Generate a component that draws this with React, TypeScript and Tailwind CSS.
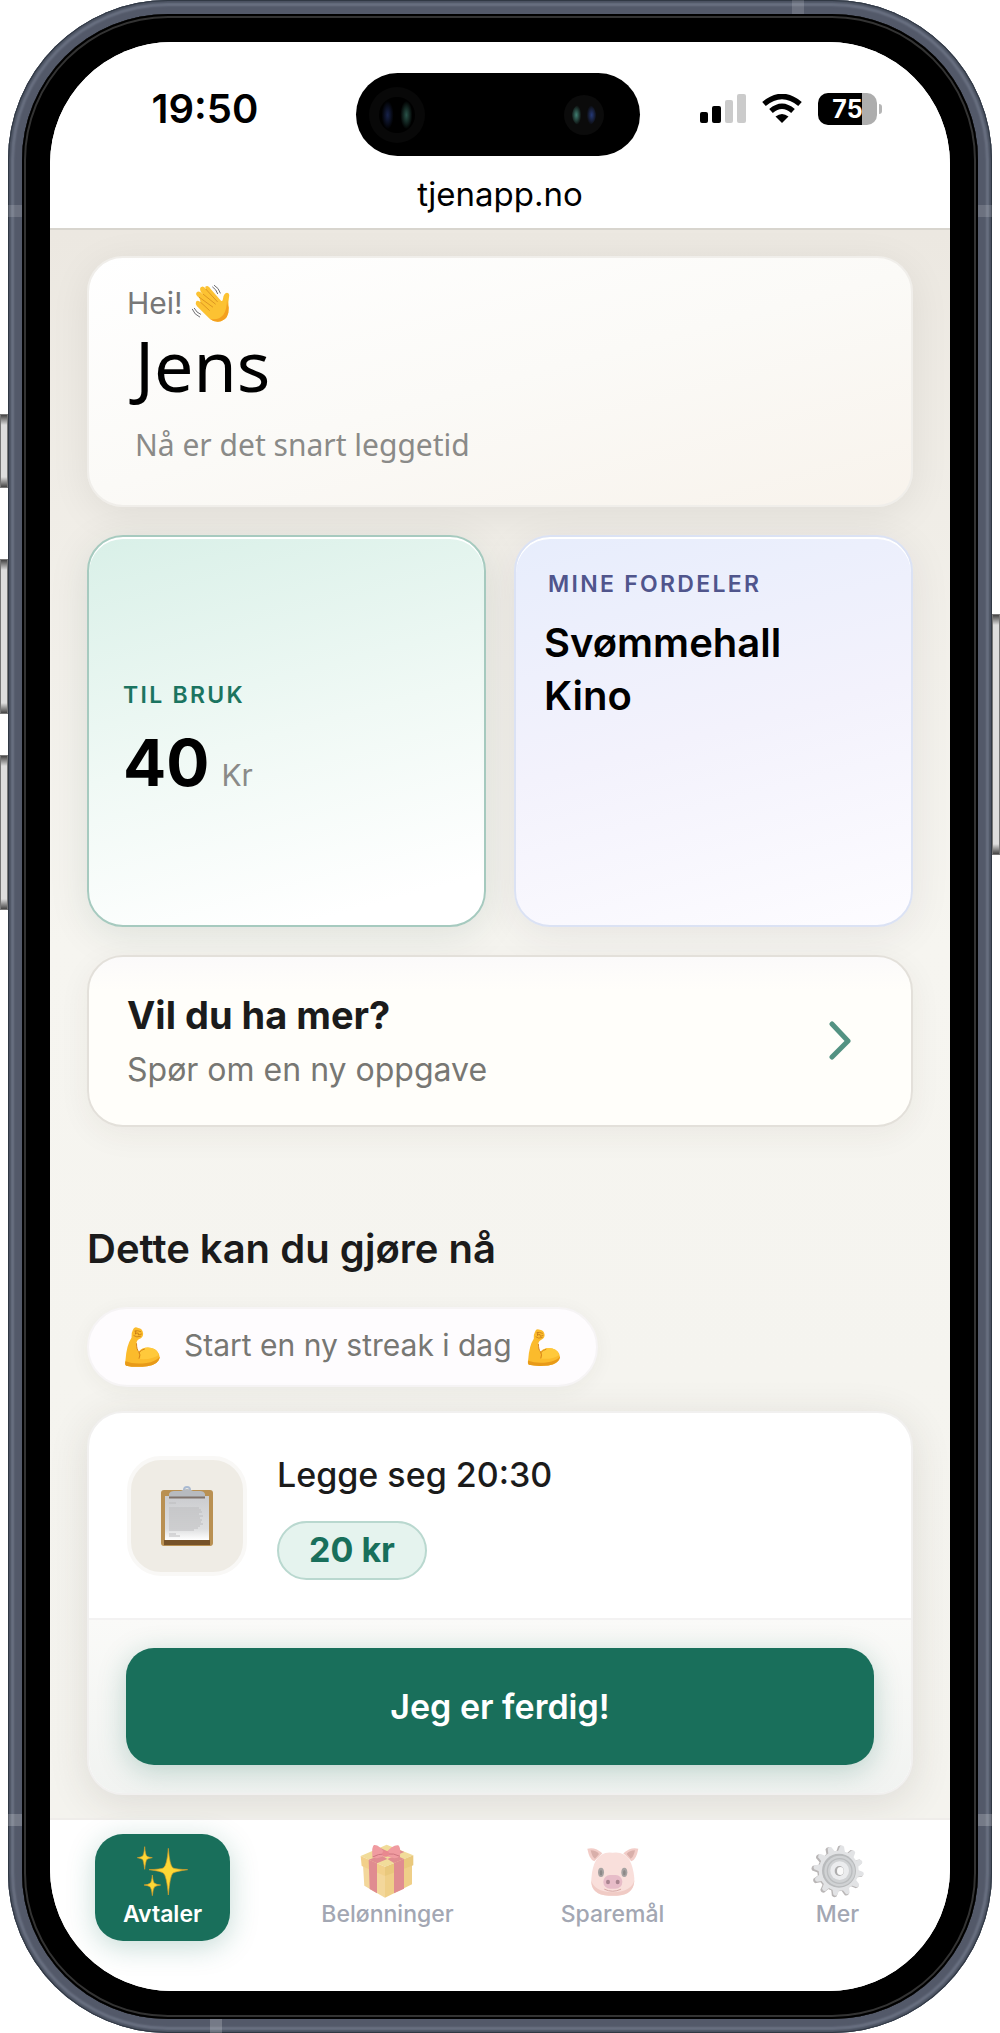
const perks = ['Svømmehall', 'Kino']

const tabs = [
  { label: 'Avtaler', href: '#avtaler', Icon: SparklesIcon, active: true },
  { label: 'Belønninger', href: '#belonninger', Icon: GiftIcon, active: false },
  { label: 'Sparemål', href: '#sparemal', Icon: PigIcon, active: false },
  { label: 'Mer', href: '#mer', Icon: GearIcon, active: false },
]

const gearTeeth = [0, 30, 60, 90, 120, 150, 180, 210, 240, 270, 300, 330]

function WaveIcon() {
  return (
    <svg viewBox="573 131 120 120" className="w-10 h-10" aria-hidden="true">
      <g stroke="#6f6f73" strokeWidth="3" fill="none" strokeLinecap="round">
        <path d="M643 138Q657 146 661 161M638 143Q649 150 653 163" />
        <path d="M577 210Q583 226 599 233M583 207Q589 220 602 225" />
      </g>
      <path
        d="M588 187Q594 181 602 189L598 176Q583 165 591 158Q598 153 610 167L602 157Q597 144 606 142Q612 140 618 150Q612 140 622 140Q628 141 632 149L663 184Q668 188 669 178Q671 161 681 160Q690 161 687 174Q684 187 686 205Q687 237 663 246Q645 251 629 238L591 201Q585 193 588 187Z"
        fill="#fcc232"
      />
      <path
        d="M686 205Q687 237 663 246Q645 251 629 238Q655 244 670 226Q681 212 681 180Q682 196 686 205Z"
        fill="#f4a01f"
      />
      <g stroke="#dd9622" strokeWidth="3" fill="none" strokeLinecap="round">
        <path d="M602 189L628 213M598 174L638 203M610 165L646 194M618 150L652 187" />
      </g>
    </svg>
  )
}

function MuscleIcon({ className }: { className: string }) {
  return (
    <svg viewBox="-2 -3 110 126" className={className} aria-hidden="true">
      <path
        d="M24 9Q28 -3 40 3Q53 4 55 20Q55 31 43 36Q33 41 35 55Q37 70 42 74Q56 58 80 63Q103 69 105 92Q99 113 67 118Q30 122 4 116Q-1 113 2 99Q5 54 20 32Q19 17 24 9Z"
        fill="#fbbb2c"
      />
      <path
        d="M2 103Q28 113 65 108Q92 104 105 89Q103 112 67 118Q30 122 4 116Q-1 113 2 103Z"
        fill="#e89a19"
      />
      <path d="M42 74Q56 58 80 63Q98 68 102 84Q80 99 45 96Q50 85 42 74Z" fill="#ffc93b" />
      <path
        d="M35 50Q35 68 42 74Q48 83 43 94M43 76Q50 68 59 66"
        stroke="#d78318"
        strokeWidth="3"
        fill="none"
        strokeLinecap="round"
      />
      <path
        d="M30 12Q38 9 48 14M32 19L40 18L41 24L50 21M27 26Q35 33 47 28M33 12L32 21"
        stroke="#b96a10"
        strokeWidth="2"
        fill="none"
        strokeLinecap="round"
      />
    </svg>
  )
}

function ClipboardIcon() {
  return (
    <svg viewBox="0 0 52 60" className="w-[52px] h-[60px]" aria-hidden="true">
      <defs>
        <linearGradient id="paper" x1="0" y1="0" x2="0" y2="1">
          <stop offset="0" stopColor="#cbcccf" />
          <stop offset="0.75" stopColor="#dedfe0" />
          <stop offset="1" stopColor="#ffffff" />
        </linearGradient>
      </defs>
      <rect y="4" width="52" height="56" rx="3" fill="#b99052" />
      <rect x="3" y="54" width="46" height="5" fill="#765229" />
      <rect x="4" y="10" width="44" height="44" fill="url(#paper)" />
      <circle cx="26" cy="4" r="3" fill="none" stroke="#a9bad2" strokeWidth="2" />
      <path d="M8 11V8Q9 5 13 5H20Q26 1 32 5H39Q43 5 44 8V11Z" fill="#b7babf" />
      <path d="M8 11.5H44" stroke="#7f726c" strokeWidth="2" />
      <path
        d="M8 17H15M8 22H38M8 24H40M8 26H41M8 28H38M8 30H42M8 32H39M8 34H41M8 36H40M8 38H42M8 40H39M8 42H37M8 44H33M8 48H15M8 50H19"
        stroke="#bcbcbe"
        strokeWidth="1"
      />
    </svg>
  )
}

function SparklesIcon() {
  return (
    <svg viewBox="408 732 162 162" className="w-[54px] h-[54px]" aria-hidden="true">
      <g fill="#fdd835" stroke="#d79b28" strokeWidth="2" strokeLinejoin="round">
        <path d="M505 745Q509 797 519 804Q528 808 563 809Q528 814 519 819Q510 827 505 885Q500 827 490 819Q481 813 447 809Q481 808 490 804Q501 797 505 745Z" />
        <path d="M434 740Q436 765 441 769Q445 772 457 773Q445 775 441 778Q437 782 434 808Q431 782 427 778Q422 775 412 773Q422 772 427 769Q432 765 434 740Z" />
        <path d="M457 825Q459 847 464 850Q469 854 482 855Q469 857 464 860Q459 865 457 887Q455 865 450 860Q445 857 432 855Q445 854 450 850Q455 847 457 825Z" />
      </g>
    </svg>
  )
}

function GiftIcon() {
  return (
    <svg viewBox="1080 729 162 162" className="w-[54px] h-[54px]" aria-hidden="true">
      <path d="M1089 793L1155 823V890L1093 854Z" fill="#f3d79b" />
      <path d="M1155 823L1236 790V850L1155 890Z" fill="#efcf88" />
      <path d="M1082 765L1160 731L1240 763L1155 797Z" fill="#f1dc9a" />
      <path d="M1082 765L1155 797V825L1085 795Z" fill="#f2d08a" />
      <path d="M1155 797L1240 763V793L1155 825Z" fill="#e9c87c" />
      <path d="M1106 776L1131 787V877L1109 864ZM1182 786L1212 774V863L1182 877Z" fill="#e08c90" />
      <path d="M1106 776L1190 743L1213 753L1131 787ZM1118 747L1182 786L1212 774L1140 740Z" fill="#e08c90" />
      <path d="M1155 758Q1138 730 1122 732Q1115 735 1117 768Q1134 778 1155 762Q1182 779 1200 766Q1203 739 1195 733Q1179 730 1155 758Z" fill="#f09ba0" />
      <path d="M1118 768Q1136 758 1152 759M1200 766Q1180 756 1163 759" stroke="#ce767f" strokeWidth="3" fill="none" />
      <rect x="1147" y="750" width="20" height="17" rx="7" fill="#e9888f" />
    </svg>
  )
}

function PigIcon() {
  return (
    <svg viewBox="257 730 162 162" className="w-[54px] h-[54px]" aria-hidden="true">
      <path d="M261 744Q285 738 306 758L282 782Q267 777 261 744Z" fill="#f2cdc8" />
      <path d="M414 744Q390 738 369 758L393 782Q408 777 414 744Z" fill="#f2cdc8" />
      <path d="M271 749Q288 749 296 760L284 774Q275 769 271 749ZM404 749Q387 749 379 760L391 774Q400 769 404 749Z" fill="#d9afaa" />
      <path d="M337 756Q371 751 388 779Q399 800 402 833Q404 882 350 885H325Q269 882 273 835Q275 800 287 779Q304 751 337 756Z" fill="#f9dfdb" />
      <path d="M273 838Q279 872 337 875Q396 872 402 838Q401 883 350 885H325Q272 883 273 838Z" fill="#f0cbc5" />
      <ellipse cx="302" cy="815" rx="9" ry="14" fill="#a7a3a2" />
      <ellipse cx="372" cy="815" rx="9" ry="14" fill="#a7a3a2" />
      <ellipse cx="302" cy="816" rx="4" ry="8" fill="#8c8988" />
      <ellipse cx="372" cy="816" rx="4" ry="8" fill="#8c8988" />
      <rect x="309" y="823" width="57" height="41" rx="20" fill="#e7bcc8" />
      <ellipse cx="323" cy="844" rx="6" ry="7" fill="#a98590" />
      <ellipse cx="352" cy="844" rx="6" ry="7" fill="#a98590" />
      <path d="M313 866Q337 878 361 866" stroke="#d6a8a5" strokeWidth="3" fill="none" strokeLinecap="round" />
    </svg>
  )
}

function GearIcon() {
  return (
    <svg viewBox="931 730 162 162" className="w-[54px] h-[54px]" aria-hidden="true">
      <g fill="#b9b6b6">
        {gearTeeth.map((a) => (
          <path key={a} d="M998 756L1002 737Q1009 731 1016 737L1021 756Z" transform={`rotate(${a + 8} 1010 812)`} />
        ))}
        <circle cx="1010" cy="812" r="60" />
      </g>
      <g fill="#e2e3e5">
        {gearTeeth.map((a) => (
          <path key={a} d="M1003 756L1008 737Q1014 731 1020 737L1026 756Z" transform={`rotate(${a + 8} 1014 810)`} />
        ))}
        <circle cx="1014" cy="810" r="60" />
      </g>
      <circle cx="1015" cy="810" r="51" fill="#b9bbbd" />
      <circle cx="1017" cy="811" r="46" fill="#d0d2d4" />
      <circle cx="1017" cy="811" r="39" fill="#bbbdbf" />
      <circle cx="1017" cy="811" r="35" fill="#d0d2d4" />
      <circle cx="1017" cy="810" r="28" fill="#ebecee" />
      <ellipse cx="1016" cy="811" rx="14" ry="15" fill="#aeadae" />
      <ellipse cx="1019" cy="811" rx="10" ry="12" fill="#fafafa" />
    </svg>
  )
}

function StatusBar() {
  return (
    <div className="flex items-center h-[83px]">
      <div className="flex-1 pb-3 pl-1 text-center text-[40px] leading-[48px] font-semibold">19:50</div>
      <div className="flex items-center justify-between w-[284px] h-full rounded-full bg-black pl-[13px] pr-9">
        <div className="flex items-center justify-center w-14 h-14 rounded-full bg-[#080808]">
          <div className="w-9 h-9 rounded-full bg-[radial-gradient(ellipse_6px_14px_at_24%_50%,#17224a,transparent),radial-gradient(ellipse_6px_14px_at_76%_50%,#295349,transparent)] bg-black" />
        </div>
        <div className="flex items-center justify-center w-10 h-10 rounded-full bg-[#0b0b0b]">
          <div className="w-6 h-6 rounded-full bg-[radial-gradient(ellipse_5px_10px_at_18%_50%,#418073,transparent),radial-gradient(ellipse_5px_10px_at_82%_50%,#263a78,transparent)]" />
        </div>
      </div>
      <div className="flex-1 flex items-center justify-center gap-4 pb-3 pr-2">
        <svg viewBox="0 0 46 29" className="w-[46px] h-[29px]" aria-label="Signal">
          <rect y="18" width="8" height="11" rx="2" />
          <rect x="12" y="12" width="9" height="17" rx="2" />
          <rect x="25" y="6" width="8" height="23" rx="2" fill="#cbcbcb" />
          <rect x="37" width="9" height="29" rx="2" fill="#cbcbcb" />
        </svg>
        <svg viewBox="0 0 40 29" className="w-10 h-[29px]" aria-label="Wi-Fi">
          <path d="M20 29L13.500 22.500Q20 17.500 26.500 22.500Z" />
          <path d="M9 17Q20 7.500 31 17" fill="none" stroke="#000" strokeWidth="5.500" />
          <path d="M2 10Q20 -5 38 10" fill="none" stroke="#000" strokeWidth="5.500" />
        </svg>
        <div className="flex items-center gap-0.5">
          <div className="w-[59px] h-8 rounded-[10px] bg-linear-to-r from-black from-75% to-[#adadad] to-75% text-white text-center text-[25px] leading-8 font-bold">
            75
          </div>
          <div className="w-[3px] h-2.5 rounded-r-full bg-[#b5b5b5]" />
        </div>
      </div>
    </div>
  )
}

function SideButton({ className }: { className: string }) {
  return (
    <div
      className={`absolute w-2 border border-[#777] bg-[linear-gradient(#444,#ddd_10px,#ddd_calc(100%-10px),#444)] ${className}`}
    />
  )
}

export default function App() {
  return (
    <div className="relative min-h-screen px-2 bg-white font-['Inter',sans-serif] text-black">
      {/* Hardware buttons */}
      <SideButton className="left-0 top-[414px] h-[74px]" />
      <SideButton className="left-0 top-[559px] h-[155px]" />
      <SideButton className="left-0 top-[755px] h-[155px]" />
      <SideButton className="right-0 top-[614px] h-[241px]" />

      {/* Metal frame */}
      <div className="relative flex flex-col min-h-screen rounded-[160px] p-3.5 bg-[#535969] shadow-[inset_0_0_0_1px_#303843,inset_0_0_2px_3px_#4a5160,inset_0_0_2px_6px_#6b7283]">
        {/* Antenna bands */}
        <div className="absolute top-0 left-[784px] w-3 h-3.5 bg-white/15" />
        <div className="absolute bottom-0 left-[202px] w-3 h-3.5 bg-white/20" />
        <div className="absolute left-0 top-[205px] w-3.5 h-3 bg-white/15" />
        <div className="absolute right-0 top-[205px] w-3.5 h-3 bg-white/15" />
        <div className="absolute left-0 bottom-[207px] w-3.5 h-3 bg-white/20" />
        <div className="absolute right-0 bottom-[207px] w-3.5 h-3 bg-white/20" />

        <div className="flex-1 flex flex-col rounded-[146px] p-7 bg-black shadow-[inset_0_0_0_2px_#000,inset_0_0_0_4px_#333]">
          <div className="flex-1 flex flex-col overflow-hidden rounded-[122px] bg-white">
            <header className="pt-[31px] border-b-2 border-[#d8d5ce] bg-white">
              <StatusBar />
              <p className="text-center text-[33px] leading-[68px] pt-1">tjenapp.no</p>
            </header>

            <main className="flex-1 flex flex-col px-[37px] pt-[26px] pb-5 bg-linear-to-b from-[#ece8e1] via-[#f6f5f0] via-45% to-[#f4f3ee]">
              <div className="flex flex-col gap-7">
                {/* Greeting */}
                <section className="rounded-[36px] border-2 border-[#f0eeea] px-[38px] pt-[25px] pb-[38px] bg-linear-165 from-white via-[#fbfaf7] to-[#f8f3ec] shadow-[0_8px_40px_rgba(0,0,0,0.07)]">
                  <p className="flex items-center gap-2 text-[30px] leading-10 text-[#777]">
                    Hei! <WaveIcon />
                  </p>
                  <div className="pl-2 font-['Noto_Sans',sans-serif]">
                    <h1 className="mt-0.5 text-[70px] leading-20">Jens</h1>
                    <p className="mt-[18px] text-[30px] leading-11 text-[#8a8a88]">Nå er det snart leggetid</p>
                  </div>
                </section>

                {/* Balance and perks */}
                <div className="grid grid-cols-2 gap-7">
                  <section className="flex flex-col justify-center min-h-[392px] rounded-[36px] border-2 border-[#a6cabf] px-[34px] pt-4 bg-linear-165 from-[#d9f0e8] via-[#f0f9f5] to-white to-90% shadow-[inset_0_2px_0_#fff,0_8px_40px_rgba(24,60,50,0.1)]">
                    <h2 className="text-[23px] leading-8 font-semibold tracking-widest uppercase text-[#1b7460]">Til bruk</h2>
                    <p className="flex items-baseline gap-3 mt-4 text-[64px] leading-[72px] font-bold">
                      40
                      <span className="text-[30px] leading-11 font-normal text-[#8a8a88]">Kr</span>
                    </p>
                  </section>
                  <section className="min-h-[392px] rounded-[36px] border-2 border-[#dbe2f4] px-7 pt-[31px] bg-linear-165 from-[#e7edfc] via-[#f3f2fc] to-[#fdfcff] shadow-[inset_0_2px_0_#fff,0_8px_40px_rgba(50,40,60,0.08)]">
                    <h2 className="pl-1 text-[23px] leading-8 font-semibold tracking-widest uppercase text-[#50558c]">Mine fordeler</h2>
                    <ul className="mt-4 text-[40px] leading-[53px] font-semibold">
                      {perks.map((p) => (
                        <li key={p}>{p}</li>
                      ))}
                    </ul>
                  </section>
                </div>

                {/* Ask for a new task */}
                <button
                  type="button"
                  className="flex items-center justify-between rounded-[36px] border-2 border-[#e3e0da] pl-[38px] pr-[52px] py-[33px] bg-linear-to-b from-[#fbfafa] to-[#fffefa] to-20% text-left shadow-[0_8px_32px_rgba(60,50,40,0.06)]"
                >
                  <span className="flex flex-col gap-2">
                    <span className="text-[38px] leading-[50px] font-bold text-[#1b1b1b]">Vil du ha mer?</span>
                    <span className="text-[32px] leading-11 text-[#777773]">Spør om en ny oppgave</span>
                  </span>
                  <svg viewBox="0 0 40 40" className="w-10 h-10" fill="none" stroke="#539282" strokeWidth="5" strokeLinecap="round" strokeLinejoin="round">
                    <path d="M13 3L29 20L13 36" />
                  </svg>
                </button>
              </div>

              <h2 className="mt-24 text-[40px] leading-[52px] font-semibold text-[#1b1b1b]">Dette kan du gjøre nå</h2>

              <div className="flex items-center self-start mt-8 h-20 rounded-full border-2 border-[#f6f4f5] px-[34px] bg-[#fefcfe] shadow-[0_4px_20px_rgba(60,50,40,0.05)]">
                <MuscleIcon className="w-[39px] h-[42px]" />
                <span className="ml-[22px] mr-3.5 pb-1 text-[30px] leading-10 text-[#777773]">Start en ny streak i dag</span>
                <MuscleIcon className="w-9 h-[39px]" />
              </div>

              {/* Task */}
              <article className="mt-6 rounded-[36px] border-2 border-[#f1f0ef] overflow-hidden bg-white shadow-[0_8px_40px_rgba(60,50,40,0.12)]">
                <div className="flex items-center gap-[30px] px-[38px] py-[38px]">
                  <div className="flex items-center justify-center w-[120px] h-[120px] rounded-[34px] border-4 border-[#f9f8f6] bg-[#efece5]">
                    <ClipboardIcon />
                  </div>
                  <div className="flex flex-col items-start gap-[22px]">
                    <h3 className="text-[34px] leading-12 font-medium text-[#1b1b1b]">Legge seg 20:30</h3>
                    <span className="h-[59px] rounded-full border-2 border-[#b9d8cf] px-[30px] bg-[#e5f3ee] text-[34px] leading-[54px] font-bold text-[#186f5b]">
                      20 kr
                    </span>
                  </div>
                </div>
                <div className="border-t-2 border-[#f3f2f2] px-[37px] py-7 bg-linear-to-b from-[#fafaf8] to-[#f1f3f1]">
                  <button
                    type="button"
                    className="w-full h-[117px] rounded-[28px] bg-[#196f5b] text-[34px] leading-11 font-semibold text-white shadow-[0_6px_28px_rgba(25,111,91,0.25)]"
                  >
                    Jeg er ferdig!
                  </button>
                </div>
              </article>
            </main>

            <nav className="grid grid-cols-4 justify-items-center border-t-2 border-[#efedea] pt-3.5 pb-[50px] bg-white">
              {tabs.map(({ label, href, Icon, active }) => (
                <a
                  key={label}
                  href={href}
                  className={`flex flex-col items-center rounded-[28px] px-7 pt-2.5 pb-[11px] text-[23px] leading-8 ${
                    active
                      ? 'bg-[#196f5b] font-semibold text-white shadow-[0_6px_28px_rgba(25,111,91,0.25)]'
                      : 'font-medium text-[#a3a7b3]'
                  }`}
                >
                  <Icon />
                  {label}
                </a>
              ))}
            </nav>
          </div>
        </div>
      </div>
    </div>
  )
}
